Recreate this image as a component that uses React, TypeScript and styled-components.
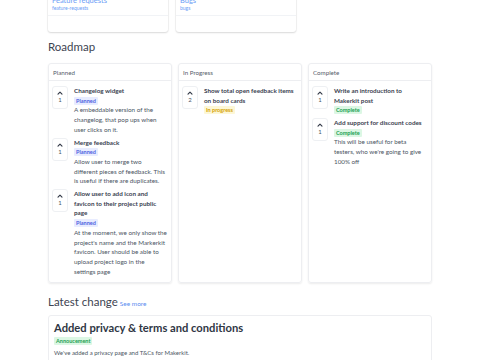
import React, { ReactElement } from 'react'
import styled, { createGlobalStyle } from 'styled-components'

const GlobalStyle = createGlobalStyle`
  html, body {
    margin: 0;
    padding: 0;
    background: #ffffff;
    font-family: Lato, 'Open Sans', sans-serif;
    color: #374151;
    overflow: hidden;
  }
`

const Page = styled.div`
  width: 384px;
  margin-left: 48px;
  margin-top: -5px;
`

const BoardRow = styled.div`
  display: flex;
  gap: 8px;
`

const BoardCard = styled.div`
  width: 120px;
  background: #fff;
  border-radius: 3px;
  box-shadow: 0 1px 2px rgba(0, 0, 0, 0.12), 0 0 0 1px rgba(0, 0, 0, 0.03);
  overflow: hidden;
`

const BoardBody = styled.div`
  padding: 1px 4px 3px;
  border-bottom: 1px solid #f1f3f6;
`

const BoardTitle = styled.div`
  font-size: 7.5px;
  line-height: 9px;
  color: #6b9cf5;
`

const BoardSlug = styled.div`
  font-size: 5px;
  line-height: 7px;
  color: #6b9cf5;
`

const BoardFooter = styled.div`
  height: 16px;
`

const SectionTitle = styled.h2`
  margin: 0;
  font-size: 11.5px;
  font-weight: 400;
  line-height: 16px;
  color: #3d4451;
  display: flex;
  align-items: baseline;
  gap: 2px;
`

const RoadmapTitle = styled(SectionTitle)`
  margin-top: 7px;
`

const LatestTitle = styled(SectionTitle)`
  margin-top: 11px;
`

const SeeMore = styled.span`
  font-size: 6.5px;
  color: #5b8def;
`

const Columns = styled.div`
  display: grid;
  grid-template-columns: repeat(3, 1fr);
  gap: 6px;
  margin-top: 8px;
  align-items: start;
`

const Column = styled.div<{ $height: number }>`
  height: ${({ $height }) => $height}px;
  border: 1px solid #edeef1;
  border-radius: 3px;
  box-shadow: 0 1px 2px rgba(0, 0, 0, 0.08);
  box-sizing: border-box;
`

const ColumnHeader = styled.div`
  height: 17px;
  padding: 0 4px;
  display: flex;
  align-items: center;
  font-size: 6.2px;
  color: #565d6a;
  border-bottom: 1px solid #edeef1;
  box-sizing: border-box;
`

const ColumnBody = styled.div`
  padding: 5px 3px 0 3px;
  display: flex;
  flex-direction: column;
  gap: 3px;
`

const Item = styled.div`
  display: flex;
  gap: 6px;
`

const Vote = styled.div`
  flex: none;
  width: 16px;
  height: 23px;
  border: 1px solid #eef0f3;
  border-radius: 3px;
  box-sizing: border-box;
  display: flex;
  flex-direction: column;
  align-items: center;
  padding-top: 4px;
  font-size: 6px;
  color: #4b5563;
  line-height: 10px;
`

const ItemText = styled.div`
  flex: 1;
  min-width: 0;
  font-size: 6.3px;
  line-height: 9.7px;
  white-space: pre;
`

const ItemTitle = styled.div`
  font-weight: 700;
  color: #3a4150;
`

const ItemDesc = styled.div`
  color: #4b5563;
`

const tones = {
  blue: { bg: '#e8ecff', fg: '#4f5fe0' },
  yellow: { bg: '#fdf7d6', fg: '#d4a106' },
  green: { bg: '#dcf7e4', fg: '#22a052' },
}

const Badge = styled.div<{ $tone: keyof typeof tones }>`
  width: fit-content;
  padding: 0 2px;
  font-size: 5.5px;
  line-height: 8px;
  margin: 1px 0 0.7px;
  font-weight: 700;
  border-radius: 1px;
  white-space: nowrap;
  background: ${({ $tone }) => tones[$tone].bg};
  color: ${({ $tone }) => tones[$tone].fg};
`

const ChangeCard = styled.div`
  margin-top: 3px;
  border: 1px solid #edeef1;
  border-radius: 3px;
  padding: 4px 5px 8px;
`

const ChangeTitle = styled.div`
  font-size: 11.2px;
  font-weight: 700;
  line-height: 16px;
  color: #2f3644;
`

const ChangeText = styled.div`
  margin-top: 3px;
  font-size: 6px;
  line-height: 9px;
  color: #4b5563;
`

const Chevron = (): ReactElement => (
  <svg width="6" height="4" viewBox="0 0 6 4" fill="none">
    <path d="M1 3.2 L3 1.2 L5 3.2" stroke="#2f3644" strokeWidth="1.1" strokeLinecap="round" strokeLinejoin="round" />
  </svg>
)

interface Entry {
  title: string
  votes: number
  desc?: string
}

interface Lane {
  name: string
  label: string
  tone: keyof typeof tones
  items: Entry[]
}

// line breaks follow the wrapping of the original board
const lanes: Lane[] = [
  {
    name: 'Planned',
    label: 'Planned',
    tone: 'blue',
    items: [
      {
        title: 'Changelog widget',
        votes: 1,
        desc: 'A embeddable version of the\nchangelog, that pop ups when\nuser clicks on it.',
      },
      {
        title: 'Merge feedback',
        votes: 1,
        desc: 'Allow user to merge two\ndifferent pieces of feedback. This\nis useful if there are duplicates.',
      },
      {
        title: 'Allow user to add icon and\nfavicon to their project public\npage',
        votes: 1,
        desc: "At the moment, we only show the\nproject's name and the Markerkit\nfavicon. User should be able to\nupload project logo in the\nsettings page",
      },
    ],
  },
  {
    name: 'In Progress',
    label: 'In progress',
    tone: 'yellow',
    items: [{ title: 'Show total open feedback items\non board cards', votes: 2 }],
  },
  {
    name: 'Complete',
    label: 'Complete',
    tone: 'green',
    items: [
      { title: 'Write an introduction to\nMakerkit post', votes: 1 },
      {
        title: 'Add support for discount codes',
        votes: 1,
        desc: "This will be useful for beta\ntesters, who we're going to give\n100% off",
      },
    ],
  },
]

export default function App(): ReactElement {
  return (
    <>
      <GlobalStyle />
      <Page>
        <BoardRow>
          <BoardCard>
            <BoardBody>
              <BoardTitle>Feature requests</BoardTitle>
              <BoardSlug>feature-requests</BoardSlug>
            </BoardBody>
            <BoardFooter />
          </BoardCard>
          <BoardCard>
            <BoardBody>
              <BoardTitle>Bugs</BoardTitle>
              <BoardSlug>bugs</BoardSlug>
            </BoardBody>
            <BoardFooter />
          </BoardCard>
        </BoardRow>

        <RoadmapTitle>Roadmap</RoadmapTitle>
        <Columns>
          {lanes.map((lane) => (
            <Column key={lane.name} $height={220}>
              <ColumnHeader>{lane.name}</ColumnHeader>
              <ColumnBody>
                {lane.items.map((item) => (
                  <Item key={item.title}>
                    <Vote>
                      <Chevron />
                      <span>{item.votes}</span>
                    </Vote>
                    <ItemText>
                      <ItemTitle>{item.title}</ItemTitle>
                      <Badge $tone={lane.tone}>{lane.label}</Badge>
                      {item.desc && <ItemDesc>{item.desc}</ItemDesc>}
                    </ItemText>
                  </Item>
                ))}
              </ColumnBody>
            </Column>
          ))}
        </Columns>

        <LatestTitle>
          Latest change <SeeMore>See more</SeeMore>
        </LatestTitle>
        <ChangeCard>
          <ChangeTitle>Added privacy &amp; terms and conditions</ChangeTitle>
          <Badge $tone="green">Annoucement</Badge>
          <ChangeText>We've added a privacy page and T&amp;Cs for Makerkit.</ChangeText>
        </ChangeCard>
      </Page>
    </>
  )
}
